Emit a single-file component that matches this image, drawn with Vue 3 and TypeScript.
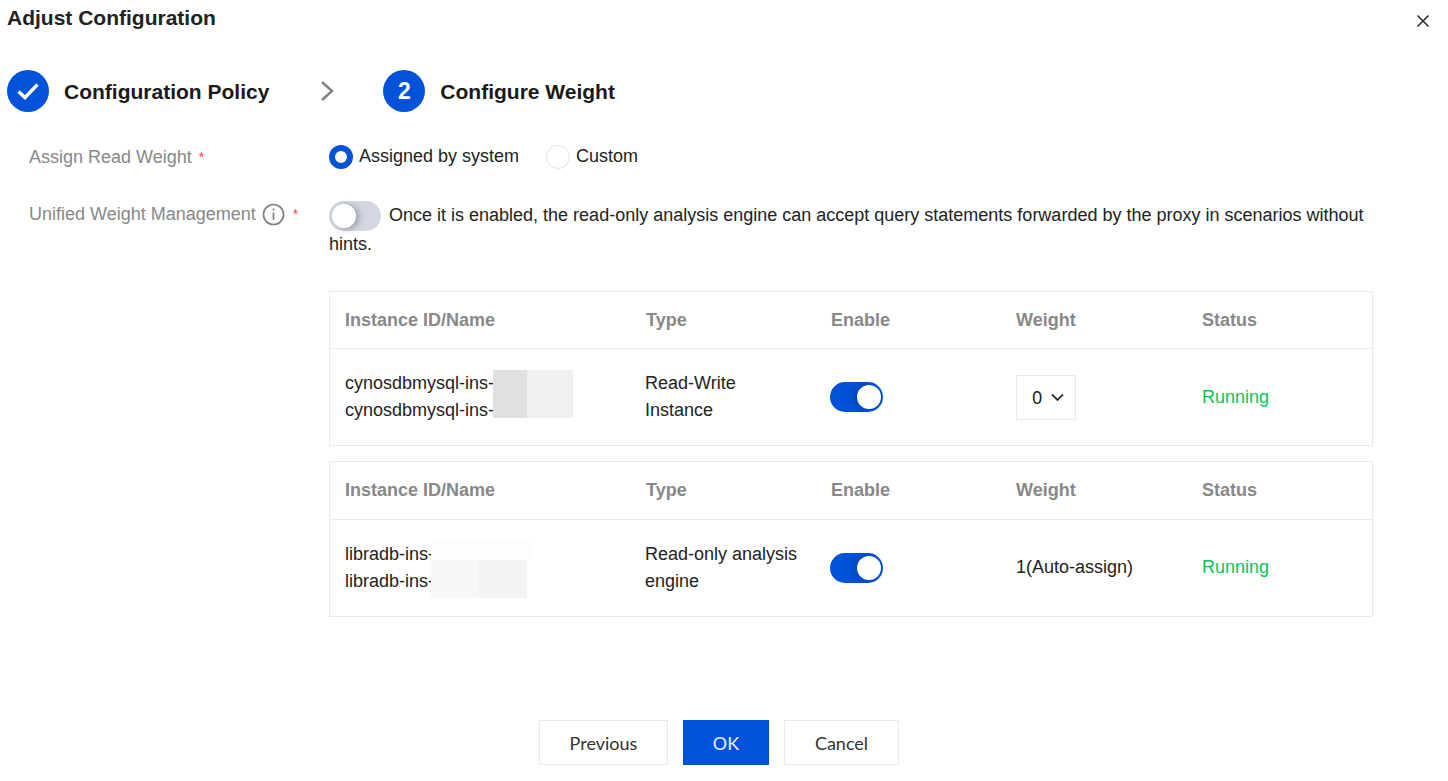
<script setup lang="ts">
interface Row {
  names: string[];
  type: string[];
  weight: string;
  select: boolean;
  blocks: string;
}
const cols = ['Instance ID/Name', 'Type', 'Enable', 'Weight', 'Status'];
const rows: Row[] = [
  { names: ['cynosdbmysql-ins-', 'cynosdbmysql-ins-'], type: ['Read-Write', 'Instance'], weight: '0', select: true, blocks: 'dark' },
  { names: ['libradb-ins-', 'libradb-ins-'], type: ['Read-only analysis', 'engine'], weight: '1(Auto-assign)', select: false, blocks: 'light' },
];
</script>

<template>
  <div class="dialog">
    <header class="head">
      <h1 class="title">Adjust Configuration</h1>
      <svg class="close" width="14" height="14" viewBox="0 0 14 14" aria-label="Close">
        <path d="M1.5 1.5 12.5 12.5M12.5 1.5 1.5 12.5" stroke="#333" stroke-width="1.7" fill="none" />
      </svg>
    </header>

    <div class="steps">
      <span class="step-dot">
        <svg width="24" height="20" viewBox="0 0 24 20"><path d="M2.5 10.5 9 16.5 21.5 3.5" stroke="#fff" stroke-width="3.4" fill="none" /></svg>
      </span>
      <span class="step-text">Configuration Policy</span>
      <svg class="step-arrow" width="16" height="24" viewBox="0 0 16 24"><path d="M3 3 13 12 3 21" stroke="#808080" stroke-width="2.4" fill="none" /></svg>
      <span class="step-dot">2</span>
      <span class="step-text">Configure Weight</span>
    </div>

    <div class="form-row first">
      <label class="label">Assign Read Weight<i class="req">*</i></label>
      <div class="radios">
        <span class="radio checked"></span><span class="radio-text">Assigned by system</span>
        <span class="radio"></span><span class="radio-text">Custom</span>
      </div>
    </div>

    <div class="form-row second">
      <label class="label">Unified Weight Management<svg class="info" width="23" height="23" viewBox="0 0 23 23">
          <circle cx="11.5" cy="11.5" r="10" stroke="#808080" stroke-width="1.7" fill="none" />
          <path d="M11.5 9.6V17M11.5 5.6V7.6" stroke="#808080" stroke-width="1.7" fill="none" />
        </svg><i class="req">*</i></label>
      <div class="desc">
        <span class="switch off"><span class="knob"></span></span>Once it is enabled, the read-only analysis engine can accept query statements forwarded by the proxy in scenarios without hints.
      </div>
    </div>

    <div class="tables">
      <div v-for="(row, i) in rows" :key="i" class="table">
        <div class="tr th">
          <div v-for="c in cols" :key="c" class="cell">{{ c }}</div>
        </div>
        <div class="tr td">
          <div class="cell names">
            <div v-for="(n, j) in row.names" :key="j">{{ n }}</div>
            <span :class="['mask', row.blocks]"><b></b><b></b></span>
          </div>
          <div class="cell tight">
            <div v-for="(t, j) in row.type" :key="j">{{ t }}</div>
          </div>
          <div class="cell tight">
            <span class="switch on"><span class="knob"></span></span>
          </div>
          <div class="cell">
            <span v-if="row.select" class="select">{{ row.weight }}
              <svg width="13" height="9" viewBox="0 0 13 9"><path d="M1 1.5 6.5 7 12 1.5" stroke="#333" stroke-width="1.9" fill="none" /></svg>
            </span>
            <span v-else class="lift">{{ row.weight }}</span>
          </div>
          <div class="cell status"><span class="lift">Running</span></div>
        </div>
      </div>
    </div>

    <footer class="foot">
      <button class="btn">Previous</button>
      <button class="btn primary">OK</button>
      <button class="btn">Cancel</button>
    </footer>
  </div>
</template>

<style>
html, body { margin: 0; background: #fff; }
</style>

<style scoped>
.dialog {
  width: 1448px;
  height: 781px;
  box-sizing: border-box;
  overflow: hidden;
  font-family: "Liberation Sans", Arial, sans-serif;
  font-size: 18px;
  color: #222;
  background: #fff;
  position: relative;
}
.head {
  display: flex;
  justify-content: space-between;
  align-items: flex-start;
  padding: 7px 18px 0 7px;
  height: 70px;
  box-sizing: border-box;
}
.title {
  margin: 0;
  font-size: 21px;
  line-height: 22px;
  font-weight: 700;
  color: #222;
}
.close { margin-top: 7px; }
.steps {
  display: flex;
  align-items: center;
  height: 42px;
  padding-left: 7px;
}
.step-dot {
  width: 42px;
  height: 42px;
  border-radius: 50%;
  background: #0052d9;
  color: #fff;
  font-size: 23px;
  font-weight: 700;
  display: flex;
  align-items: center;
  justify-content: center;
  margin-right: 15px;
}
.step-text {
  font-size: 21px;
  font-weight: 700;
  color: #1a1a1a;
  padding-top: 2px;
}
.step-arrow { margin: 0 48px 0 50px; }
.form-row { display: flex; padding-left: 29px; }
.form-row.first { margin-top: 30px; height: 48px; }
.form-row.second { height: 60px; margin-top: 9px; }
.label {
  width: 300px;
  flex: none;
  color: #888;
  line-height: 30px;
  font-size: 18px;
  display: flex;
  align-items: center;
  height: 30px;
  white-space: pre;
}
.req {
  color: #f04444;
  font-style: normal;
  font-size: 14px;
  margin-left: 7px;
}
.info { margin-left: 6px; }
.info + .req { margin-left: 8px; }
.radios { display: flex; align-items: center; height: 30px; }
.radio {
  width: 24px;
  height: 24px;
  border-radius: 50%;
  box-sizing: border-box;
  border: 1px solid #dcdfe6;
  margin-right: 6px;
}
.radio.checked { border: 6.5px solid #0052d9; }
.radio-text { margin-right: 27px; margin-bottom: 2px; }
.desc {
  width: 1044px;
  line-height: 28px;
  padding-top: 2px;
  font-size: 18px;
  color: #222;
}
.switch {
  display: inline-block;
  width: 53px;
  height: 30px;
  border-radius: 15px;
  position: relative;
  vertical-align: middle;
}
.desc .switch { width: 52px; margin-right: 8px; margin-top: -3px; top: 1px; }
.switch.off { background: #d2d7e2; }
.switch.on { background: #0052d9; }
.knob {
  position: absolute;
  top: 3px;
  width: 24px;
  height: 24px;
  border-radius: 50%;
  background: #fff;
}
.off .knob { left: 3px; box-shadow: 3px 1px 6px rgba(0, 0, 0, .28); }
.on .knob { right: 2px; box-shadow: -4px 0 8px rgba(0, 0, 0, .18); }
.tables {
  margin: 32px 0 0 329px;
  width: 1044px;
  display: flex;
  flex-direction: column;
  gap: 15px;
}
.table { border: 1px solid #e7eaef; }
.tr {
  display: grid;
  grid-template-columns: 301px 185px 185px 186px 1fr;
  align-items: center;
}
.th {
  height: 57px;
  border-bottom: 1px solid #e7eaef;
  color: #888;
  font-weight: 700;
}
.table:first-child .th { height: 56px; }
.td { height: 96px; line-height: 27px; }
.cell { padding-left: 15px; position: relative; }
.cell.tight { padding-left: 14px; }
.lift { position: relative; top: -1px; }
.table:first-child .lift { top: 0; }
.mask {
  position: absolute;
  display: flex;
}
.mask b { display: block; }
.mask.dark { left: 163px; top: 0; height: 48px; }
.mask.dark b:first-child { width: 34px; background: #e0e0e0; }
.mask.dark b:last-child { width: 46px; background: #f0f0f0; }
.mask.light { left: 101px; top: 19px; height: 38px; }
.mask.light::before {
  content: "";
  position: absolute;
  left: 0;
  top: -20px;
  width: 101px;
  height: 20px;
  background: #fdfdfd;
}
.mask.light b:first-child { width: 48px; background: #f8f8f8; }
.mask.light b:last-child { width: 48px; background: #f3f3f3; }
.select {
  display: inline-flex;
  align-items: center;
  gap: 9px;
  width: 60px;
  height: 45px;
  box-sizing: border-box;
  border: 1px solid #e7eaef;
  padding-left: 15px;
  font-family: "Noto Sans", sans-serif;
}
.status { color: #0ac45c; }
.foot {
  position: absolute;
  left: 539px;
  top: 720px;
  display: flex;
  gap: 15px;
}
.btn {
  height: 45px;
  width: 129px;
  box-sizing: border-box;
  border: 1px solid #e7eaef;
  background: #fff;
  color: #333;
  font-family: Lato, "Noto Sans", sans-serif;
  font-size: 18px;
  padding: 0;
}
.btn.primary { width: 86px; background: #0052d9; border-color: #0052d9; color: #e8f0ff; }
.btn:last-child { width: 115px; }
</style>
